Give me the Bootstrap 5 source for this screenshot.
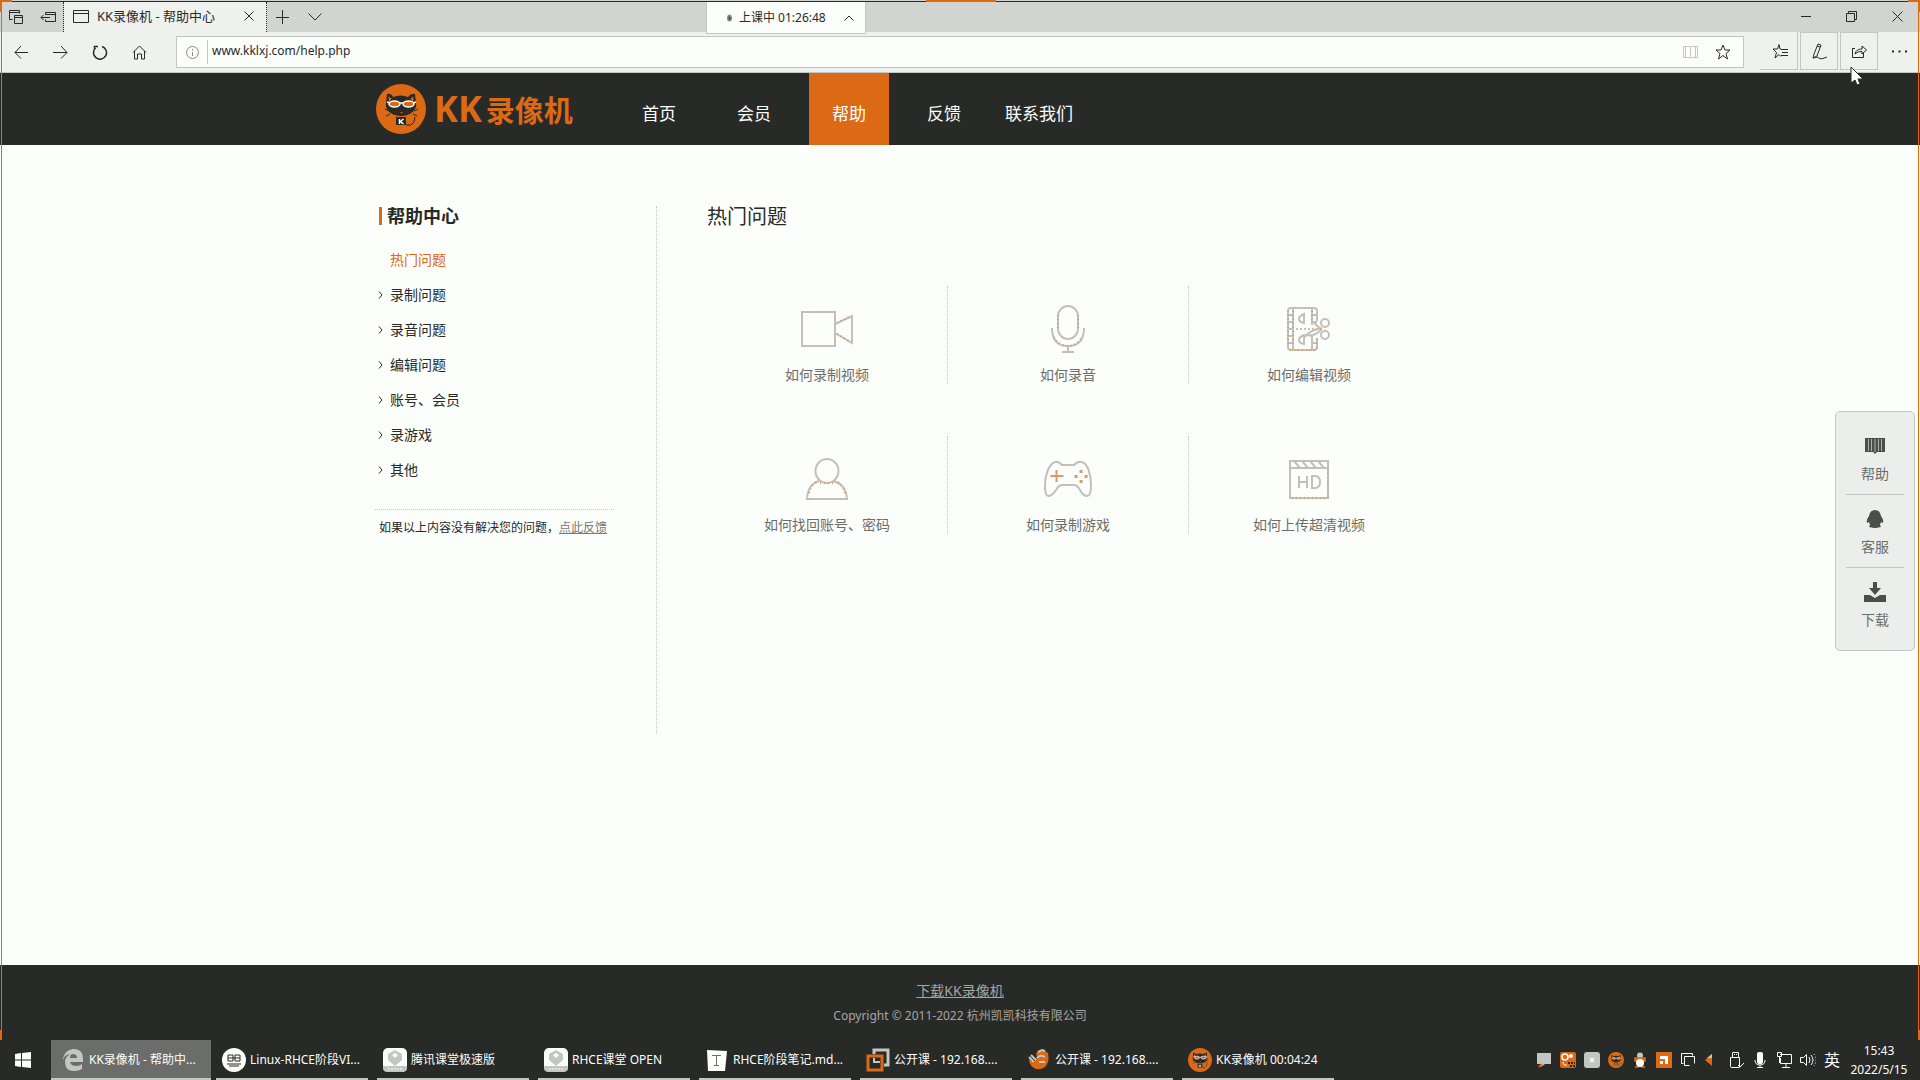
<!DOCTYPE html>
<html lang="zh-CN">
<head>
<meta charset="utf-8">
<meta name="viewport" content="width=device-width, initial-scale=1">
<title>KK录像机 - 帮助中心</title>
<link href="https://cdn.jsdelivr.net/npm/bootstrap@5.3.0/dist/css/bootstrap.min.css" rel="stylesheet">
<style>
:root{--paper:#fcfefc;--ash:#c4c6c4;--ink:#282a28;--kk:#dc6914}
body{font-family:"Noto Sans","Noto Sans CJK SC",sans-serif;font-size:14px;line-height:20px;color:var(--ink);background:var(--paper)}
svg{display:block;flex:none}
.ln{fill:none;stroke:currentColor;stroke-width:1}
a{color:inherit}
button{background:none;border:0;padding:0;color:inherit;font:inherit}
/* window frame */
.frame-edge{position:fixed;z-index:20;pointer-events:none;background:var(--kk)}
.edge-l{left:1px;top:0;width:1px;bottom:40px}
.edge-r{right:1px;top:0;width:1px;bottom:40px}
.edge-t{left:0;right:0;top:1px;height:1px;background:var(--ink)}
.edge-tm{left:926px;width:70px;top:0;height:2px}
.edge-tl{left:0;width:12px;top:0;height:2px}
.edge-tr{right:0;width:12px;top:0;height:2px}
.edge-ll{left:0;width:2px;top:0;height:12px}
.edge-rr{right:0;width:2px;top:0;height:12px}
.edge-bl{left:0;width:2px;bottom:40px;height:10px}
.edge-br{right:0;width:2px;bottom:40px;height:10px}
/* browser */
.tabstrip{height:32px;padding-top:2px;background:#d2d4d2}
.strip-tools{width:64px;padding-left:9px;gap:17px;border-right:1px dotted var(--ink)}
.page-tab{width:203px;padding:0 12px 2px 9px;background:#eff1ef;font-size:13px;border-right:1px dotted var(--ink)}
.win-tools{gap:35px;padding:0 17px 2px 0}
.class-timer{position:absolute;z-index:5;left:706px;top:2px;width:160px;height:32px;border:1px solid var(--ash);border-top:0;background:var(--paper);font-size:12px;padding:0 11px 0 20px;gap:7px}
.toolbar{height:41px;background:#eff1ef;border-bottom:1px solid var(--ash)}
.nav-tools{width:176px;padding-left:14px;gap:24px}
.address{margin:4px 0;height:32px;border:1px solid var(--ash);background:var(--paper)}
.address input{border:0;border-left:1px solid var(--ash);background:none;height:24px;outline:0;font-size:12px;padding:0 4px 4px;color:var(--ink)}
.side-tools{width:176px;padding-left:16px;gap:2px}
.side-tools button{width:38px;height:38px;border:1px solid var(--ash);border-width:0 1px 1px 0;display:flex;align-items:center;justify-content:center}
.side-tools .boxed{border-width:1px}
.side-tools button:last-child{border:0}
.pointer{position:fixed;z-index:30;right:56px;top:67px}
/* site */
.site-wrap{width:100%;max-width:1170px;margin:0 auto}
.site-nav{background:var(--ink);color:var(--paper)}
.site-nav .site-wrap{height:72px}
.brand-link{width:244px;padding-left:1px;color:var(--kk);font:700 29px/40px "Noto Sans CJK SC",sans-serif;gap:8px}
.brand-link .kk-latin{font:700 36px/40px "Noto Sans",sans-serif}
.menu-list{gap:15px}
.menu-list a{width:80px;font-size:17px;line-height:24px;padding:29px 0 19px;text-align:center;text-decoration:none;white-space:nowrap}
.menu-list a.on{background:var(--kk)}
.help-body{padding-top:61px}
.help-side{width:282px;border-right:1px dotted var(--ash);height:528px}
.side-title{font-size:18px;line-height:20px;font-weight:700;margin:0 0 16px 4px}
.side-title::before{content:"";width:3px;height:18px;background:var(--kk);margin-right:5px}
.topic-list{margin:0 0 22px;padding:0;list-style:none}
.topic-list li{height:35px}
.topic-list a{text-decoration:none;display:flex;align-items:center;gap:7px;height:35px;padding-left:3px}
.topic-list .current{color:var(--kk)}
.topic-list svg{width:5px}
.side-note{width:239px;border-top:1px dotted var(--ash);font-size:12px;line-height:18px;padding:9px 0 0 4px;margin:0;white-space:nowrap}
.side-note a{color:#777977}
.help-main{padding-left:50px}
.main-title{font-size:20px;line-height:22px;margin:0 0 58px;font-weight:400}
.tile{height:98px;border-right:1px dotted var(--ash);margin-bottom:52px;padding-top:17px;text-decoration:none;color:#6b6d6b;gap:10px}
.tile-col:nth-child(3n) .tile{border-right-color:transparent}
.tiles{width:723px}
.tile svg{color:#c5bfb9;stroke-width:2}
.tile .accent{stroke:#d99a6a}
.dock{position:fixed;z-index:6;right:5px;top:411px;width:80px;background:#eceeec;border:1px solid var(--ash);border-radius:5px;padding:10px 10px 9px}
.dock a{height:73px;text-decoration:none;color:#6b6d6b;gap:8px;padding-top:14px;border-bottom:1px solid var(--ash)}
.dock a:last-child{border:0}
.dock svg{color:#4c4e4c}
.site-foot{background:var(--ink);color:#a4a6a4;height:75px;padding-top:16px;font-size:12px}
.site-foot a{font-size:14px;margin-bottom:5px}
/* desktop task bar */
.taskbar{height:40px;background:var(--ink);color:var(--paper);font-size:12px}
.start{width:51px;padding-left:15px}
.task{width:160px;margin-right:1px;height:40px;padding:0 4px;text-align:left}
.task>span{border-bottom:2px solid var(--ash);height:40px;padding:2px 0 0 6px;gap:4px;white-space:nowrap}
.task.on{padding:0}
.task.on>span{background:#6b6d6b;padding-left:10px}
.tray{gap:8px;padding-right:10px}
.clock{line-height:19px;width:62px;text-align:center}
.tray svg{width:16px;height:16px}
</style>
</head>
<body class="d-flex flex-column min-vh-100">
<svg width="0" height="0" class="position-absolute" aria-hidden="true">
<defs>
<symbol id="cat" viewBox="0 0 50 50">
<circle cx="25" cy="25" r="25" fill="#dc6914"/>
<path d="M11 10q4-1 6 3q8-3 15 0q3-4 7-3l1 9q1 3-1 6q-4 7-14 7t-14-7q-2-3-1-6z" fill="#282a28"/>
<path d="M12.500 12.500l3 2-2.500 4zM37.500 12.500l-3 2 2.500 4z" fill="#dc6914"/>
<ellipse cx="18.500" cy="20" rx="5.500" ry="3" fill="#dc6914" stroke="#fcfefc" stroke-width="1.500"/>
<ellipse cx="32.500" cy="20" rx="5.500" ry="3" fill="#dc6914" stroke="#fcfefc" stroke-width="1.500"/>
<path d="M11 18l3 1M24 19h3M37 19l3-1" stroke="#fcfefc" stroke-width="1.500"/>
<path d="M24 28h3l-1.500 1.500z" fill="#dc6914"/>
<path d="M9 25l4 2M10 32l4-2M42 25l-4 2M41 32l-4-2M30 41h5q4-2 4-8" stroke="#282a28" fill="none"/>
<path d="M20 33h10v8h-10z" fill="#282a28"/>
<path d="M23.500 35v5M27.500 35l-3 2.500 3 2.500" stroke="#fcfefc" stroke-width="1.500" fill="none"/>
</symbol>
<symbol id="chev" viewBox="0 0 5 8"><path d="M1 .5L4 4 1 7.500" class="ln"/></symbol>
<symbol id="leaf" viewBox="0 0 24 24"><rect width="24" height="24" rx="5" fill="#fcfefc"/><path d="M0 18h24v2q0 4-5 4H5q-5 0-5-4z" fill="#c4c6c4"/><path d="M12 2l7 4v6l-7 6-7-6V6z" fill="#c4c6c4"/><path d="M9 7l3-2 3 2-3 3z" fill="#fcfefc"/><path d="M5 21h14" stroke="#fcfefc" stroke-dasharray="2 1"/></symbol>
</defs></svg>

<div class="frame-edge edge-t"></div><div class="frame-edge edge-l"></div><div class="frame-edge edge-r"></div><div class="frame-edge edge-tm"></div><div class="frame-edge edge-tl"></div><div class="frame-edge edge-tr"></div><div class="frame-edge edge-ll"></div><div class="frame-edge edge-rr"></div><div class="frame-edge edge-bl"></div><div class="frame-edge edge-br"></div>

<header>
<div class="tabstrip d-flex">
  <div class="strip-tools d-flex align-items-center">
    <button aria-label="标签页"><svg width="14" height="14" class="ln"><path d="M3.500 9.500h-3v-9h10v3M.5 2.500h10M5.500 5.500h8v8h-8zM5.500 7.500h8"/></svg></button>
    <button aria-label="搁置标签页"><svg width="17" height="14" class="ln"><path d="M5.500 4.500v-2h10v9h-10v-2M5.500 4.500h10M1 7.500h9M3.500 5L1 7.500 3.500 10"/></svg></button>
  </div>
  <div class="page-tab d-flex align-items-center">
    <svg width="16" height="13" class="ln me-2"><path d="M.5.5h15v12H.5zM.5 3.500h15"/></svg>
    <span class="text-nowrap">KK录像机 - 帮助中心</span>
    <button class="ms-auto" aria-label="关闭标签页"><svg width="10" height="10" class="ln"><path d="M.5.5l9 9M9.500.5l-9 9"/></svg></button>
  </div>
  <div class="d-flex align-items-center gap-3 ps-2">
    <button aria-label="新标签页"><svg width="15" height="14" class="ln"><path d="M7.500 0v14M1 7.500h13"/></svg></button>
    <button aria-label="标签预览"><svg width="16" height="8" class="ln"><path d="M2.500.5L9 7 15.500.5"/></svg></button>
  </div>
  <div class="win-tools d-flex align-items-center ms-auto">
    <button aria-label="最小化"><svg width="10" height="10" class="ln"><path d="M0 5.500h10"/></svg></button>
    <button aria-label="还原"><svg width="11" height="11" class="ln"><path d="M.5 2.500h8v8h-8zM2.500 2.500v-2h8v8h-2"/></svg></button>
    <button aria-label="关闭"><svg width="11" height="11" class="ln"><path d="M.5.5l10 10M10.500.5l-10 10"/></svg></button>
  </div>
</div>
<div class="class-timer d-flex align-items-center">
  <svg width="5" height="8"><ellipse cx="2.500" cy="4" rx="2.500" ry="3.500" fill="#8a8c8a"/><path d="M1.500 3l2 1-2 2" class="ln"/></svg><span class="text-nowrap">上课中 01:26:48</span>
  <button class="ms-auto" aria-label="收起"><svg width="10" height="6" class="ln"><path d="M.5 5.500L5 1l4.500 4.500"/></svg></button>
</div>
<div class="toolbar d-flex">
  <div class="nav-tools d-flex align-items-center">
    <button aria-label="后退"><svg width="15" height="14" class="ln"><path d="M1 7.500h13M7 1L1 7.500 7 13.500"/></svg></button>
    <button aria-label="前进"><svg width="15" height="14" class="ln"><path d="M0 7.500h14M8 1l6 6.500L8 13.500"/></svg></button>
    <button aria-label="刷新"><svg width="16" height="15" class="ln"><path d="M10 1.500A6.500 6.500 0 1 1 3.500 3M6 1.500H2.500V5" stroke-width="1.500"/></svg></button>
    <button aria-label="主页"><svg width="15" height="15" class="ln"><path d="M1 7.500L7.500 1 14 7.500M2.500 6v8h3V9h4v5h3V6"/></svg></button>
  </div>
  <div class="address d-flex align-items-center flex-grow-1">
    <svg width="14" height="13" class="ln mx-2" style="color:#8a8c8a"><circle cx="7.500" cy="6.500" r="6"/><path d="M7.500 6v4M7.500 3v1.500"/></svg>
    <input class="flex-grow-1" type="text" aria-label="网址" value="www.kklxj.com/help.php">
    <button class="me-3" aria-label="阅读视图"><svg width="16" height="14" class="ln" style="color:#c4c6c4"><path d="M7.500 1.500v11M.5 1.500h6l1 1 1-1h6v11h-6l-1 1-1-1h-6zM2.500 1v11M12.500 1v11"/></svg></button>
    <button class="me-2" aria-label="收藏"><svg width="20" height="16" class="ln"><path d="M8 1l2 5h5l-4 3.500 1.500 5.500L8 11.500 3.500 15 5 9.500 1 6h5z"/></svg></button>
  </div>
  <div class="side-tools d-flex">
    <button class="ps-1" aria-label="中心"><svg width="17" height="16" class="ln"><path d="M9 6H8L7 1.500 5.500 6H1l3.500 3.500L3 15l4-3.500 2 2M9 6.500h7M10 9.500h6M9 12.500h7"/></svg></button>
    <button class="boxed" aria-label="添加笔记"><svg width="17" height="17" class="ln"><path d="M7 1l3 1-4 11-4 2 1-4zM6 3l3 1M2 15q5-2 6 0t8-1"/></svg></button>
    <button class="boxed" aria-label="分享"><svg width="17" height="15" class="ln"><path d="M4 4.500H1.500v9h11V9M4 10q1-5 7-5V2l4.500 4-4.500 4V7.500Q7 7 4 10z"/></svg></button>
    <button aria-label="设置"><svg width="15" height="3"><path d="M0 .5h2v2H0zM6.500.5h2v2h-2zM13 .5h2v2h-2z" fill="currentColor"/></svg></button>
  </div>
</div>
</header>

<nav class="site-nav">
<div class="site-wrap d-flex">
  <a href="#" class="brand-link d-flex align-items-center text-decoration-none"><svg width="50" height="50"><use href="#cat"/></svg><span class="d-flex align-items-center text-nowrap"><span class="kk-latin pe-1">KK</span>录像机</span></a>
  <div class="menu-list d-flex">
    <a href="#">首页</a><a href="#">会员</a><a href="#" class="on" aria-current="page">帮助</a><a href="#">反馈</a><a href="#">联系我们</a>
  </div>
</div>
</nav>

<main class="flex-grow-1">
<div class="site-wrap help-body d-flex">
  <aside class="help-side flex-shrink-0">
    <h2 class="side-title d-flex align-items-center">帮助中心</h2>
    <ul class="topic-list">
      <li><a href="#" class="current"><svg height="8"></svg>热门问题</a></li>
      <li><a href="#"><svg height="8"><use href="#chev"/></svg>录制问题</a></li>
      <li><a href="#"><svg height="8"><use href="#chev"/></svg>录音问题</a></li>
      <li><a href="#"><svg height="8"><use href="#chev"/></svg>编辑问题</a></li>
      <li><a href="#"><svg height="8"><use href="#chev"/></svg>账号、会员</a></li>
      <li><a href="#"><svg height="8"><use href="#chev"/></svg>录游戏</a></li>
      <li><a href="#"><svg height="8"><use href="#chev"/></svg>其他</a></li>
    </ul>
    <p class="side-note">如果以上内容没有解决您的问题，<a href="#">点此反馈</a></p>
  </aside>
  <section class="help-main">
    <h1 class="main-title">热门问题</h1>
    <div class="tiles row g-0">
      <div class="col-4 tile-col"><a href="#" class="tile d-flex flex-column align-items-center"><svg width="54" height="52" class="ln"><path d="M2 9h33v34H2zM35 21L52 13v27L35 30"/><path class="accent" stroke-dasharray="1 3" d="M37 20l14-7M37 31l14 8"/></svg>如何录制视频</a></div>
      <div class="col-4 tile-col"><a href="#" class="tile d-flex flex-column align-items-center"><svg width="54" height="52" class="ln"><rect x="17" y="3" width="20" height="33" rx="10"/><path d="M11 25q0 18 16 18t16-18M27 43v6M21 49h12"/><path class="accent" stroke-dasharray="1 3" d="M17 12v14M37 12v14M13 34q5 9 14 9t14-9"/></svg>如何录音</a></div>
      <div class="col-4 tile-col"><a href="#" class="tile d-flex flex-column align-items-center"><svg width="54" height="52" class="ln"><path d="M35 18V8q0-3-3-3H9Q6 5 6 8v36q0 3 3 3h23q3 0 3-3v-9M11 5v42M30 5v17M30 32v15M6 12h5M6 19h5M6 26h5M6 33h5M6 40h5M30 12h5M30 19h5M30 40h5M22 11q-5 2-5 5t5 4zM22 32q-5 2-5 5t5 4z"/><path d="M14 26h20" stroke-dasharray="2 2"/><path d="M23 34q3-6 17-9M32 20l8 7M24 32q8 2 15-5"/><circle cx="43" cy="20" r="4"/><circle cx="43" cy="32" r="4"/><path class="accent" stroke-dasharray="1 3" d="M6 8v36M11 8v36M30 8v12M35 36v10M8 47h25M34 26h8"/></svg>如何编辑视频</a></div>
      <div class="col-4 tile-col"><a href="#" class="tile d-flex flex-column align-items-center"><svg width="54" height="52" class="ln"><ellipse cx="27" cy="18" rx="11.500" ry="12"/><path d="M19 28Q8 31 7 46h40Q46 31 33 28"/><path class="accent" stroke-dasharray="1 3" d="M20 30h14M9 40q2-8 8-11M45 40q-2-8-8-11"/></svg>如何找回账号、密码</a></div>
      <div class="col-4 tile-col"><a href="#" class="tile d-flex flex-column align-items-center"><svg width="54" height="52" class="ln"><path d="M14 9q3-1 7 3h12q4-4 8-3c6 2 9 13 9 23q0 11-4 11t-7-6q-3-5-6-5H21q-3 0-6 5t-7 6-4-11c0-10 4-21 10-23z"/><path class="accent" d="M15.500 17v12M9.500 23h13"/><path d="M40 17v3M35 22v3M45 22v3M40 27v3" class="accent" stroke-width="3"/></svg>如何录制游戏</a></div>
      <div class="col-4 tile-col"><a href="#" class="tile d-flex flex-column align-items-center"><svg width="54" height="52" class="ln"><path d="M8 8h38v37H8zM8 15h38M12 8l6 7M20 8l6 7M28 8l6 7M36 8l6 7M17 23v12M25 23v12M17 29h8M30 23h3q5 0 5 6t-5 6h-3z"/><path class="accent" stroke-dasharray="1 3" d="M46 16v29H8"/></svg>如何上传超清视频</a></div>
    </div>
  </section>
</div>
</main>

<aside class="dock">
  <a href="#" class="d-flex flex-column align-items-center"><svg width="20" height="20"><path d="M0 2h20v14h-8l-2 2-2-2H0z" fill="currentColor"/><path d="M3.500 3v12M6.500 3v12M10 3v13M13.500 3v12M16.500 3v12" stroke="#aeb0ae"/></svg>帮助</a>
  <a href="#" class="d-flex flex-column align-items-center"><svg width="18" height="20"><path d="M9 1q5 0 6 6 3 4 2 7l-2-1-1 3 1 2-5 1H8l-5-1 1-2-1-3-2 1q-1-3 2-7 1-6 6-6z" fill="currentColor"/></svg>客服</a>
  <a href="#" class="d-flex flex-column align-items-center"><svg width="22" height="20"><path d="M9 0h4v6h4l-6 7-6-7h4zM0 13h6l5 3 5-3h6v7H0z" fill="currentColor"/></svg>下载</a>
</aside>

<footer class="site-foot d-flex flex-column align-items-center">
  <a href="#">下载KK录像机</a>
  <span>Copyright © 2011-2022 杭州凯凯科技有限公司</span>
</footer>

<div class="taskbar d-flex align-items-center">
  <button class="start" aria-label="开始"><svg width="16" height="16"><path d="M0 2l6-1v6.500H0zM7 1l9-1v7.500H7zM0 8.500h6V15l-6-1zM7 8.500h9V16l-9-1z" fill="currentColor"/></svg></button>
  <button class="task on"><span class="d-flex align-items-center"><svg width="24" height="24"><path d="M2 10Q4 2 12 1q10 0 10 9v4H9q1 4 6 4 4 0 6-2v5q-3 2-8 2-9 0-9-9 0-5 5-8-6 1-7 6zM9 10h7q0-4-4-4-3 0-3 4z" fill="#c4c6c4"/></svg>KK录像机 - 帮助中...</span></button>
  <button class="task"><span class="d-flex align-items-center"><svg width="24" height="24"><circle cx="12" cy="12" r="12" fill="#fcfefc"/><path d="M6 7h5v6H6zM13 7h5v6h-5zM6 10h12M5 16h14M7 18h10" stroke="#282a28" fill="none"/></svg>Linux-RHCE阶段VI...</span></button>
  <button class="task"><span class="d-flex align-items-center"><svg width="24" height="24"><use href="#leaf"/></svg>腾讯课堂极速版</span></button>
  <button class="task"><span class="d-flex align-items-center"><svg width="24" height="24"><use href="#leaf"/></svg>RHCE课堂 OPEN</span></button>
  <button class="task"><span class="d-flex align-items-center"><svg width="24" height="24"><path d="M2 2l20 1-2 20H3z" fill="#fcfefc"/><path d="M7 7.500h9M11.500 7v11M9 17.500h5" stroke="#6b6d6b"/></svg>RHCE阶段笔记.md...</span></button>
  <button class="task"><span class="d-flex align-items-center"><svg width="24" height="24" fill="none" stroke-width="3"><path d="M8 6V2h14v15h-4" stroke="#c4c6c4"/><path d="M2 8h14v14H2z" stroke="#dc6914"/><path d="M8 10v4h6" stroke="#c4c6c4" stroke-width="2"/></svg>公开课 - 192.168....</span></button>
  <button class="task"><span class="d-flex align-items-center"><svg width="24" height="24"><path d="M9 5q4-4 8-3l4 3q2 9-3 14-6 4-11 1-5-3-5-9l4 3q3-1 4-5z" fill="#dc6914"/><path d="M2 9l5 5M4 7l5 5M11 4l4-2 3 1M10 10q3-4 8-1M12 14h6" stroke="#c4c6c4" stroke-width="2" fill="none"/></svg>公开课 - 192.168....</span></button>
  <button class="task"><span class="d-flex align-items-center"><svg width="24" height="24"><use href="#cat"/></svg>KK录像机 00:04:24</span></button>
  <div class="tray d-flex align-items-center ms-auto">
    <svg><path d="M1 1h14v11H9l-4 3v-3H1z" fill="#c4c6c4"/><path d="M3 15l3-3" stroke="#dc6914" stroke-width="2"/></svg>
    <svg><rect width="16" height="16" rx="2" fill="#dc6914"/><circle cx="5" cy="5" r="3" stroke="#fcfefc" stroke-width="1.500" fill="none"/><circle cx="11" cy="4" r="2" fill="#fcfefc"/><path d="M3 10q0 4 4 3" stroke="#fcfefc" fill="none"/><path d="M8 11h7M10 14h5" stroke="#282a28" fill="none" stroke-width="2" stroke-dasharray="2 1"/></svg>
    <svg><rect width="16" height="16" rx="3" fill="#c4c6c4"/><path d="M6 6l4 4M10 6l-4 4" stroke="#fcfefc" stroke-width="1.500"/></svg>
    <svg><use href="#cat"/></svg>
    <svg><ellipse cx="8" cy="3.500" rx="3" ry="3" fill="#c4c6c4"/><path d="M3 6h10v3H3zM3 15h4M9 15h4" stroke="#dc6914" stroke-width="1.500" fill="#dc6914"/><ellipse cx="8" cy="11" rx="4" ry="4" fill="#fcfefc"/></svg>
    <svg><path d="M0 0h16v16H0z" fill="#dc6914"/><path d="M4 4h8v8H9V7H4zM4 9h3v3H4z" fill="#fcfefc"/></svg>
    <svg class="ln"><path d="M3.500 11.500h-2v-10h11v2M4.500 4.500h10v7M4.500 4.500v9h5"/></svg>
    <svg><path d="M1 8l7-6v12z" fill="#dc6914"/><path d="M3 6l5-4v4" fill="#c4c6c4"/></svg>
    <svg class="ln"><path d="M4.500 5V.5h6V5M2.500 5.500h9v10h-8q-1 0-1-1zM6 2.500h1M8 2.500h1M10 13l2 2 4-4"/></svg>
    <svg><rect x="5" y="0" width="6" height="12" rx="2" fill="currentColor"/><path d="M3 8q0 5 5 5t5-5M8 13v3M5 15.500h6" stroke="currentColor" fill="none"/></svg>
    <svg class="ln"><path d="M4 2.500h11.500v9H4.500V6M1.500.5h4v4h-4zM3.500 5v6M10 12v3M6 15.500h8"/></svg>
    <svg class="ln"><path d="M.5 5.500h3l3-3v11l-3-3h-3zM9 5q2 3 0 6M11 3q4 5 0 10"/><path d="M14 2q4 6 0 12" stroke-dasharray="1 2"/></svg>
    <span class="fs-6">英</span>
    <div class="clock">15:43<br>2022/5/15</div>
  </div>
</div>
<svg class="pointer" width="14" height="20"><path d="M1 0v16l4-3 2 5 3-1-2-5h5z" fill="#fcfefc" stroke="#282a28"/></svg>
<script src="https://cdn.jsdelivr.net/npm/bootstrap@5.3.0/dist/js/bootstrap.bundle.min.js"></script>
</body>
</html>
